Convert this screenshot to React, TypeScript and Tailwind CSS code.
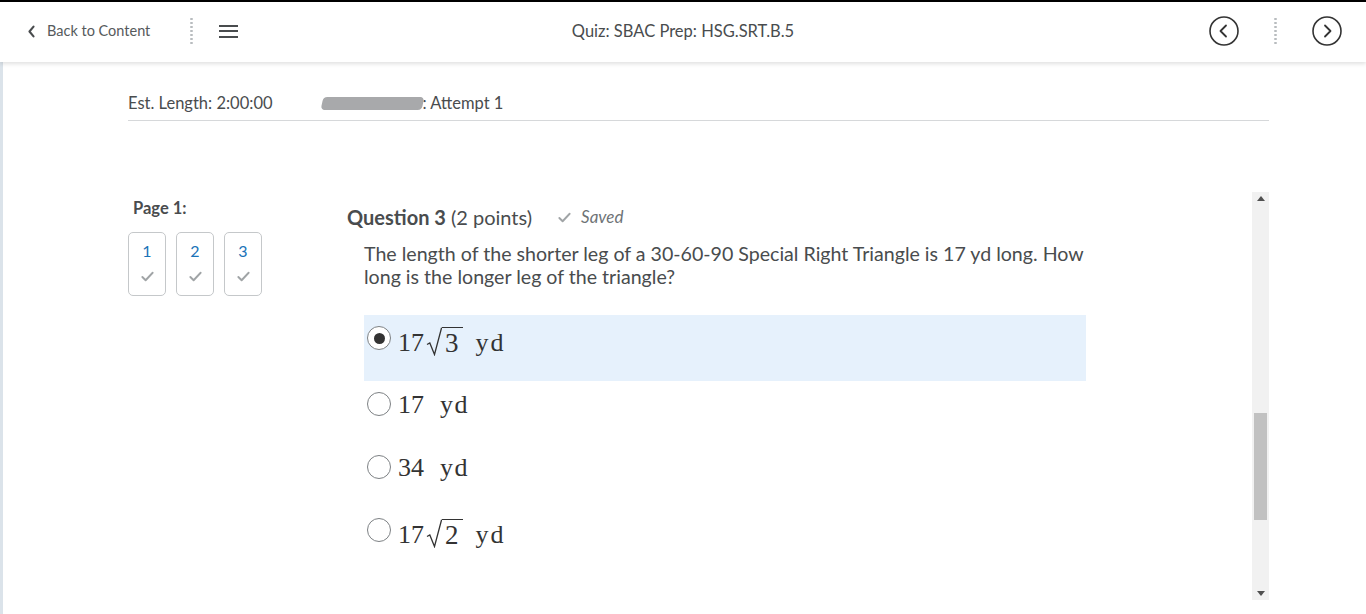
import React from "react";

const lato = { fontFamily: "Lato, 'Open Sans', sans-serif" };

function Check({ className = "" }: { className?: string }) {
  return (
    <svg viewBox="0 0 16 16" className={className} fill="none" stroke="currentColor" strokeWidth="2" strokeLinecap="round" strokeLinejoin="round">
      <path d="M2.5 8.5 L6 12 L13.5 4" />
    </svg>
  );
}

function DotSep() {
  return (
    <div className="flex flex-col gap-[2px] items-center">
      {Array.from({ length: 7 }).map((_, i) => (
        <span key={i} className="block w-[3px] h-[2px] bg-[#b8bcbf] rounded-full" />
      ))}
    </div>
  );
}

function Sqrt({ n }: { n: string }) {
  return (
    <span className="inline-flex items-stretch h-[29px] ml-[2px]">
      <svg viewBox="0 0 16 29" className="w-[16px] h-[29px] text-[#333]" fill="none" stroke="currentColor" strokeWidth="1.3" strokeLinejoin="miter">
        <path d="M1 17.5 L3.8 16 L8.5 27.5 L15.6 0.7" />
      </svg>
      <span className="border-t-[1.3px] border-[#333] flex items-end leading-[26px] pl-[3px] pr-[4px] text-[27px]">{n}</span>
    </span>
  );
}

function Option({ selected, sqrt, h, children }: { selected?: boolean; sqrt?: boolean; h: string; children: React.ReactNode }) {
  return (
    <div className={`relative ${h} ${selected ? "bg-[#e6f1fc]" : ""}`}>
      <span className="absolute left-[3px] top-[11px] w-[24px] h-[24px] rounded-full border border-[#7d8184] bg-white flex items-center justify-center">
        {selected && <span className="w-[11px] h-[11px] rounded-full bg-[#333]" />}
      </span>
      <div
        className={`ml-[34px] ${sqrt ? "pt-[12px]" : "pt-[11px]"} text-[26px] leading-[26px] text-[#333] flex items-end`}
        style={{ fontFamily: "'Liberation Serif', 'DejaVu Serif', serif" }}
      >
        {children}
      </div>
    </div>
  );
}

export default function App() {
  return (
    <div className="w-[1366px] h-[614px] overflow-hidden bg-white text-[#494c4e] relative" style={lato}>
      {/* top bar */}
      <div className="h-[62px] border-t-2 border-black bg-white flex items-center pb-[2px] relative z-10 shadow-[0_2px_4px_rgba(0,0,0,0.12)]">
        <div className="flex items-center pl-[27px] w-[420px]">
          <svg viewBox="0 0 10 16" className="w-[9px] h-[13px] text-[#494c4e]" fill="none" stroke="currentColor" strokeWidth="2.6" strokeLinecap="round" strokeLinejoin="round">
            <path d="M7.5 2 L2.5 8 L7.5 14" />
          </svg>
          <span className="ml-[11px] text-[14.5px] text-[#565a5c]">Back to Content</span>
          <div className="ml-[40px]"><DotSep /></div>
          <div className="ml-[26px] flex flex-col gap-[3.5px]">
            <span className="block w-[19px] h-[2px] bg-[#494c4e]" />
            <span className="block w-[19px] h-[2px] bg-[#494c4e]" />
            <span className="block w-[19px] h-[2px] bg-[#494c4e]" />
          </div>
        </div>
        <div className="flex-1 text-center text-[16.5px] text-[#494c4e]">Quiz: SBAC Prep: HSG.SRT.B.5</div>
        <div className="w-[420px] flex items-center justify-end pr-[24px]">
          <svg viewBox="0 0 30 30" className="w-[30px] h-[30px] text-[#333]" fill="none" stroke="currentColor" strokeWidth="1.6">
            <circle cx="15" cy="15" r="14" />
            <path d="M17 9.5 L11.5 15 L17 20.5" strokeWidth="1.8" strokeLinecap="round" strokeLinejoin="round" />
          </svg>
          <div className="ml-[35px] mr-[35px]"><DotSep /></div>
          <svg viewBox="0 0 30 30" className="w-[30px] h-[30px] text-[#333]" fill="none" stroke="currentColor" strokeWidth="1.6">
            <circle cx="15" cy="15" r="14" />
            <path d="M13 9.5 L18.5 15 L13 20.5" strokeWidth="1.8" strokeLinecap="round" strokeLinejoin="round" />
          </svg>
        </div>
      </div>

      {/* body */}
      <div className="h-[552px] border-l-[3px] border-[#dbe3ea] pl-[125px] pr-[97px]">
        <div className="flex items-center h-[59px] pt-[25px] border-b border-[#d6d8da] text-[16.5px] text-[#494c4e]">
          <span>Est. Length: 2:00:00</span>
          <span className="ml-[49px] inline-block w-[101px] h-[13px] bg-[#a8a9ab] rounded-[4px] -skew-x-12" />
          <span>: Attempt 1</span>
        </div>

        <div className="flex mt-[71px]">
          {/* page nav */}
          <div className="w-[219px] shrink-0 pt-[4px]">
            <div className="ml-[5px] text-[16.5px] font-bold text-[#494c4e]">Page 1:</div>
            <div className="flex gap-[10px] mt-[11px]">
              {["1", "2", "3"].map((n) => (
                <div key={n} className="w-[38px] h-[64px] border border-[#c5c8ca] rounded-[5px] flex flex-col items-center pt-[8px]">
                  <span className="text-[16px] text-[#1a73b8] leading-[20px]">{n}</span>
                  <Check className="w-[15px] h-[15px] text-[#a0a4a6] mt-[8px]" />
                </div>
              ))}
            </div>
          </div>

          {/* question panel */}
          <div className="flex-1 flex h-[408px]">
            <div className="flex-1 pt-[10px]">
              <div className="flex items-center">
                <span className="text-[20px] font-bold text-[#494c4e]">Question 3</span>
                <span className="text-[20px] ml-[5px] text-[#494c4e]">(2 points)</span>
                <Check className="ml-[25px] w-[15px] h-[15px] text-[#a0a4a6]" />
                <span className="ml-[9px] text-[17px] italic text-[#6e7376]">Saved</span>
              </div>
              <div className="ml-[17px] mt-[10px] w-[722px] text-[19.6px] leading-[23px] text-[#494c4e]">
                The length of the shorter leg of a 30-60-90 Special Right Triangle is 17 yd long. How long is the longer leg of the triangle?
              </div>
              <div className="ml-[17px] mt-[27px] w-[722px] flex flex-col">
                <Option selected sqrt h="h-[66px]">
                  <span>17</span>
                  <Sqrt n="3" />
                  <span className="ml-[13px] tracking-[2px]">yd</span>
                </Option>
                <Option h="h-[63px]">
                  <span>17</span>
                  <span className="ml-[16px] tracking-[1.5px]">yd</span>
                </Option>
                <Option h="h-[63px]">
                  <span>34</span>
                  <span className="ml-[16px] tracking-[1.5px]">yd</span>
                </Option>
                <Option sqrt h="h-[66px]">
                  <span>17</span>
                  <Sqrt n="2" />
                  <span className="ml-[13px] tracking-[2px]">yd</span>
                </Option>
              </div>
            </div>
            {/* scrollbar */}
            <div className="w-[17px] bg-[#f1f1f1] flex flex-col items-center justify-between py-[4px]">
              <svg viewBox="0 0 8 5" className="w-[8px] h-[5px] text-[#505050]"><path d="M0 5 L4 0 L8 5 Z" fill="currentColor" /></svg>
              <div className="flex-1 w-full relative">
                <div className="absolute left-[2px] right-[2px] top-[212px] h-[107px] bg-[#c1c1c1]" />
              </div>
              <svg viewBox="0 0 8 5" className="w-[8px] h-[5px] text-[#505050]"><path d="M0 0 L4 5 L8 0 Z" fill="currentColor" /></svg>
            </div>
          </div>
        </div>
      </div>
    </div>
  );
}
